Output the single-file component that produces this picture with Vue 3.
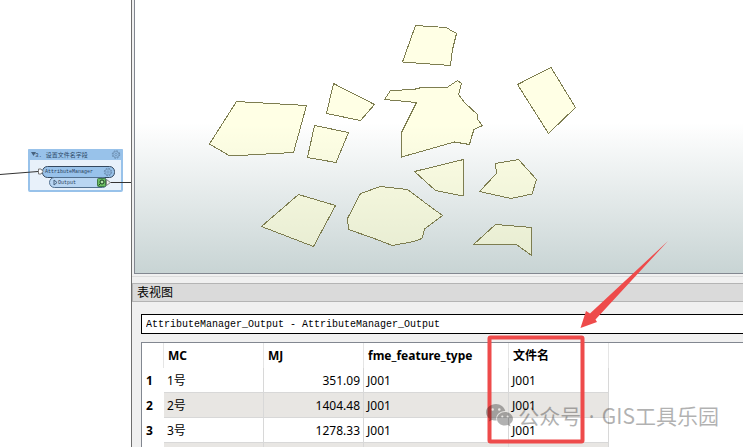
<template>
    <div class="workbench">
        <section class="canvas">
            <svg class="canvas-drawing" aria-label="工作流">
                <!-- 书签 -->
                <rect x="29" y="150" width="93" height="41" rx="1" fill="#e8f1fa" stroke="#98c2ea" stroke-width="2" />
                <rect x="28" y="149" width="95" height="11" rx="1" fill="#98c2ea" />
                <path d="M31 152h5l-2.500 4z" fill="#46627f" />
                <text class="bookmark-title" x="35" y="157">3. 设置文件名字段</text>
                <!-- 连接线 -->
                <path d="M0 174.500L38 171.500M108 182.500H131" fill="none" stroke="#333" />
                <!-- 转换器 -->
                <rect x="42.500" y="166.500" width="72" height="11" rx="5" fill="#98c2ea" stroke="#34485e" />
                <rect x="49.500" y="177.500" width="58" height="10" rx="5" fill="#b9d6f2" stroke="#52708f" />
                <path d="M38.500 169h2.500l2 2.500-2 2.500h-2.500z" fill="#fff" stroke="#777" />
                <path d="M54 180l3 2.500-3 2.500z" fill="#b9d6f2" stroke="#46627f" />
                <text class="node-label" x="45" y="173">AttributeManager</text>
                <text class="node-label" x="58" y="184">Output</text>
                <rect x="97.500" y="178.500" width="8" height="8" rx="1" fill="#6cbd62" stroke="#3f7a45" />
                <circle cx="102" cy="182" r="2" fill="#b4e2a9" stroke="#173d20" />
                <path d="M100.500 183.500l-2 2" stroke="#173d20" />
                <path d="M106.500 179.500l4 3-4 3z" fill="#eee" stroke="#888" />
                <g v-for="gear in gears" :key="gear.x" :transform="`translate(${gear.x} ${gear.y})`" fill="none"
                    stroke="#6485a6">
                    <circle r="3.700" stroke-dasharray="1.700 1.200" />
                    <circle r="2.900" stroke-width=".6" />
                    <circle r="1.200" stroke-width=".6" />
                </g>
            </svg>
        </section>

        <main class="preview">
            <svg class="map-view" aria-label="图形视图" shape-rendering="crispEdges">
                <g transform="translate(-135 0)">
                    <polygon v-for="(points, index) in parcels" :key="index" :points="points" />
                </g>
            </svg>

            <section class="table-view">
                <h2 class="panel-title">表视图</h2>
                <select class="source-select" v-model="source" aria-label="要素类型">
                    <option>AttributeManager_Output - AttributeManager_Output</option>
                </select>
                <div class="table-frame">
                    <table>
                        <colgroup>
                            <col class="col-index" />
                            <col class="col-normal" />
                            <col class="col-normal" />
                            <col class="col-type" />
                            <col class="col-normal" />
                        </colgroup>
                        <thead>
                            <tr>
                                <th></th>
                                <th>MC</th>
                                <th>MJ</th>
                                <th>fme_feature_type</th>
                                <th>文件名</th>
                            </tr>
                        </thead>
                        <tbody>
                            <tr v-for="(row, index) in rows" :key="index">
                                <th scope="row">{{ row.id }}</th>
                                <td>{{ row.mc }}</td>
                                <td class="number">{{ row.mj }}</td>
                                <td>{{ row.type }}</td>
                                <td>{{ row.file }}</td>
                            </tr>
                        </tbody>
                    </table>
                </div>
            </section>
        </main>

        <!-- 标注 -->
        <svg class="annotation" aria-hidden="true">
            <rect x="489.500" y="337.500" width="93" height="104" rx="1" fill="none" stroke="#ee4b4b" stroke-width="4" />
            <path d="M668 241L595.500 319.500L597 322L580.500 328L586 311L590 313.500Z" fill="#ee4b4b" />
        </svg>

        <div class="watermark">
            <svg class="wechat" viewBox="0 0 27 23" aria-hidden="true">
                <path fill-rule="evenodd"
                    d="M10 0C4.500 0 0 3.700 0 8.300c0 2.600 1.400 4.900 3.700 6.400l-.9 2.800 3.200-1.600c1.300.4 2.600.6 4 .6h.7C9 11 13.500 7 19.300 6.900 18.300 2.900 14.500 0 10 0ZM6.600 4.200a1.300 1.300 0 1 1 0 2.600 1.300 1.300 0 0 1 0-2.600Zm6.700 0a1.300 1.300 0 1 1 0 2.600 1.300 1.300 0 0 1 0-2.600Z" />
                <path fill-rule="evenodd"
                    d="M19 8c-4.400 0-8 3-8 6.800s3.600 6.800 8 6.800c1 0 2-.2 2.900-.5l2.600 1.400-.7-2.400c1.900-1.200 3.200-3.100 3.200-5.300C27 11 23.400 8 19 8Zm-2.700 3.400a1.100 1.100 0 1 1 0 2.200 1.100 1.100 0 0 1 0-2.200Zm5.400 0a1.100 1.100 0 1 1 0 2.200 1.100 1.100 0 0 1 0-2.200Z" />
            </svg>
            <span>公众号<span class="dot"> · </span>GIS工具乐园</span>
        </div>
    </div>
</template>

<script setup>
import { ref } from 'vue';

const source = ref('AttributeManager_Output - AttributeManager_Output');

const gears = [
    { x: 116, y: 154.5 },
    { x: 108, y: 172 }
];

// 地块边界
const parcels = [
    '236.5,101.5 306.5,105.5 293.5,152.5 230,156 209.5,144',
    '333.5,83.5 374.5,104.5 360.5,120.5 326.5,113.5',
    '314.5,125.5 348.5,132.5 336,162.5 307.5,157.5',
    '415.5,25.5 446,27.5 456.5,33.5 452.5,49.5 450.5,65.5 402.5,62',
    '384.5,99.5 390.5,90.5 413.5,89.5 421.5,87.5 447,87.5 457.5,80.5 461.5,83.5 458.5,94.5 465,103 477.5,114.5 477.5,119.5 482.5,125.5 474,129.5 471.5,137 469.5,144.5 454.5,142 401.5,157 401.5,132.5 416.5,102.5',
    '551,67.5 575.5,107.5 548.5,133.5 517.5,84.5',
    '298.5,194.5 335.5,205.5 313.5,246.5 261.5,226.5',
    '360.5,193.5 380.5,186.5 407.5,189.5 426,203.5 442.5,215.5 424.5,229 422,238.5 413.5,241.5 392.5,245.5 371.5,237.5 348.5,229.5 347.5,218.5',
    '414.5,171.5 463.5,159.5 463.5,196 435.5,190.5',
    '495.5,163.5 518.5,159.5 536.5,179.5 532,194 511,198.5 479.5,191.5 496.5,173.5',
    '473.5,244.5 495.5,224.5 531.5,227.5 531.5,255.5 516.5,244.5'
];

const rows = [
    { id: '1', mc: '1号', mj: '351.09', type: 'J001', file: 'J001' },
    { id: '2', mc: '2号', mj: '1404.48', type: 'J001', file: 'J001' },
    { id: '3', mc: '3号', mj: '1278.33', type: 'J001', file: 'J001' },
    {}
];
</script>

<style>
body {
    margin: 0;
}
</style>

<style scoped>
.workbench {
    position: relative;
    display: flex;
    height: 100vh;
    overflow: hidden;
    background-color: #f0f0f0;
    color: #000;
    font-family: 'Noto Sans', 'Noto Sans CJK SC', sans-serif;
    font-size: 12px;
}

.canvas {
    flex: 0 0 131px;
    background-color: #fff;
    border-right: 1px solid #6e6e6e;
}

.canvas-drawing {
    display: block;
    width: 100%;
    height: 100%;
}

.bookmark-title {
    font-family: 'Liberation Mono', 'Noto Sans CJK SC', monospace;
    font-size: 6px;
    fill: #2b4866;
}

.node-label {
    font-family: 'Liberation Mono', monospace;
    font-size: 5px;
    fill: #27405c;
}

.preview {
    flex: 1;
    min-width: 0;
    display: flex;
    flex-direction: column;
}

.map-view {
    flex: none;
    display: block;
    box-sizing: border-box;
    height: 274px;
    margin-left: 2px;
    border-left: 1px solid #828790;
    border-bottom: 1px solid #828790;
    background: linear-gradient(#fff 45%, #c8d4d4);
}

.map-view polygon {
    fill: rgba(255, 255, 204, 0.5);
    stroke: #7d7d50;
}

.table-view {
    flex: 1;
    min-height: 0;
    display: flex;
    flex-direction: column;
    margin-top: 2px;
    padding-top: 6px;
    border-top: 1px solid #dcdcdc;
}

.panel-title {
    margin: 0;
    padding: 1px 0 0 4px;
    border: 1px solid #b4b4b4;
    border-right: none;
    background-color: #dadada;
    font-size: 12px;
    font-weight: 400;
    line-height: 16px;
}

.source-select {
    appearance: none;
    flex: none;
    height: 20px;
    margin: 12px 0 8px 9px;
    padding: 0 4px;
    border: 1px solid #000;
    border-right: none;
    border-radius: 0;
    background-color: #fff;
    color: #000;
    font-family: 'Liberation Mono', monospace;
    font-size: 10px;
}

.table-frame {
    flex: 1;
    min-height: 0;
    overflow: hidden;
    margin-left: 9px;
    border-top: 1px solid #828790;
    border-left: 1px solid #828790;
    background-color: #fff;
}

table {
    width: 467px;
    table-layout: fixed;
    border-collapse: separate;
    border-spacing: 0;
}

.col-index {
    width: 22px;
}

.col-normal {
    width: 100px;
}

.col-type {
    width: 145px;
}

th,
td {
    box-sizing: border-box;
    height: 25px;
    padding: 0 3px;
    border-right: 1px solid #d8d8d8;
    line-height: 16px;
    text-align: left;
    white-space: nowrap;
}

thead th {
    padding: 0 4px;
    border-right-color: #e5e5e5;
}

tbody th {
    padding: 0 4px;
    border-right-color: #fff;
}

td {
    padding-top: 2px;
    border-bottom: 1px solid #d8d8d8;
}

tbody tr:nth-child(even) td {
    background-color: #e8e6e3;
}

.number {
    text-align: right;
}

.annotation {
    position: absolute;
    top: 0;
    left: 0;
    width: 100%;
    height: 100%;
    pointer-events: none;
}

.watermark {
    position: absolute;
    right: 24px;
    bottom: 16px;
    display: flex;
    align-items: center;
    gap: 5px;
    color: #000;
    font-family: 'Noto Sans CJK SC', sans-serif;
    font-size: 21px;
    line-height: 30px;
    opacity: 0.3;
    pointer-events: none;
}

.dot {
    padding: 0 2px;
    font-family: 'Noto Sans', sans-serif;
}

.wechat {
    width: 27px;
    height: 23px;
    fill: currentColor;
}
</style>
